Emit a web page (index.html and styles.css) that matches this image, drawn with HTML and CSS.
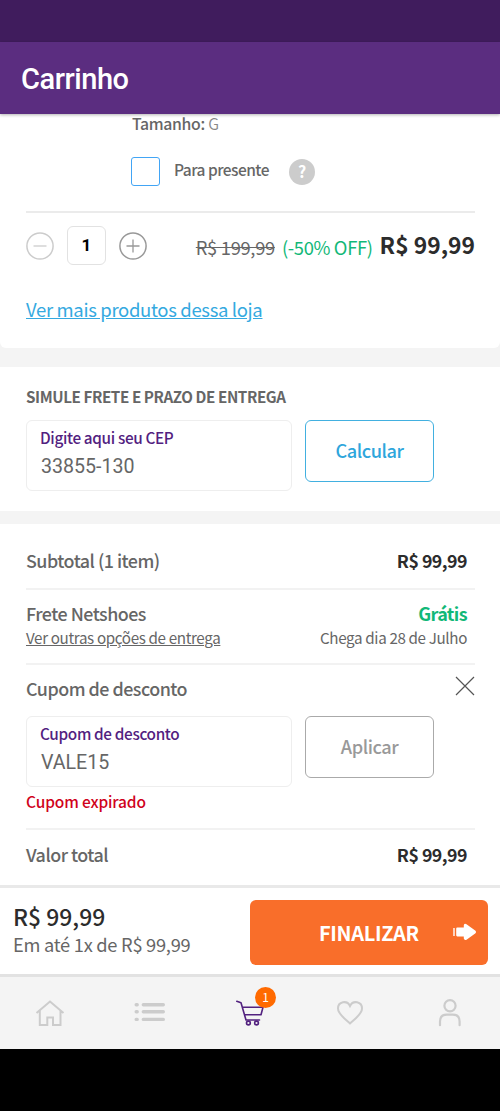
FILE: index.html
```html
<!DOCTYPE html>
<html lang="pt-BR">
<head>
<meta charset="utf-8">
<title>Carrinho</title>
<link rel="stylesheet" href="styles.css">
</head>
<body>
<div class="status"></div>
<header class="appbar"><h1>Carrinho</h1></header>
<main>
  <section class="product">
    <p class="size"><b>Tamanho:</b> <span>G</span></p>
    <div class="gift"><i class="check"></i><label>Para presente</label><i class="help">?</i></div>
    <div class="buy">
      <svg class="round" width="28" height="28" viewBox="0 0 28 28"><circle cx="14" cy="14" r="13.1"/><path d="M7.500 14h13"/></svg>
      <span class="qty">1</span>
      <svg class="round plus" width="28" height="28" viewBox="0 0 28 28"><circle cx="14" cy="14" r="13.1"/><path d="M7.500 14h13M14 7.500v13"/></svg>
      <div class="prices"><s>R$ 199,99</s><span class="off">(-50% OFF)</span><b>R$ 99,99</b></div>
    </div>
    <a class="store"><span>Ver mais produtos dessa loja</span></a>
  </section>
  <section class="shipping">
    <h2>SIMULE FRETE E PRAZO DE ENTREGA</h2>
    <div class="form">
      <div class="field"><label>Digite aqui seu CEP</label><span>33855-130</span></div>
      <button class="btn"><span>Calcular</span></button>
    </div>
  </section>
  <section class="summary">
    <div class="row subtotal"><span class="name">Subtotal (1 item)</span><b>R$ 99,99</b></div>
    <div class="freight">
      <div class="line"><span class="name">Frete Netshoes</span><b class="free">Grátis</b></div>
      <div class="line small"><u>Ver outras opções de entrega</u><span>Chega dia 28 de Julho</span></div>
    </div>
    <div class="coupon">
      <div class="coupon-head"><span class="name">Cupom de desconto</span>
        <svg width="20" height="20" viewBox="0 0 20 20"><path d="M1 1l18 18M19 1L1 19"/></svg></div>
      <div class="form">
        <div class="field"><label>Cupom de desconto</label><span>VALE15</span></div>
        <button class="btn disabled"><span>Aplicar</span></button>
      </div>
      <p class="error"><span>Cupom expirado</span></p>
    </div>
    <div class="row total"><span class="name">Valor total</span><b>R$ 99,99</b></div>
  </section>
</main>
<div class="checkout">
  <div class="amount"><strong>R$ 99,99</strong><span>Em até 1x de R$ 99,99</span></div>
  <button class="finish"><span>FINALIZAR</span>
    <svg width="24" height="18" viewBox="0 0 24 18"><path d="M1 5v8" stroke="#fff" stroke-width="1.400"/><path d="M4.300 4.600h6.500V2.200Q11.300 .2 13.500 1.200L22.500 7.700Q23.700 9 22.500 10.300L13.500 16.700Q11.300 17.600 10.800 15.600V13.400H4.300Q3.200 13.400 3.200 12.300V5.700Q3.200 4.600 4.300 4.600Z" fill="#fff"/></svg></button>
</div>
<nav>
  <a><svg width="30" height="28" viewBox="0 0 30 28"><path d="M1.500 14L15 2.500L28.500 14M4.800 11.500v14.500H12.300v-7.500h5.700v7.500h7.500V11.500"/></svg></a>
  <a><svg class="list" width="32" height="22" viewBox="0 0 32 22"><path d="M2.200 2.700h1M2.200 9.800h1M2.200 17.400h1M9.300 2.700h20M9.300 9.800h20M9.300 17.400h20"/></svg></a>
  <a class="cart"><svg width="30" height="28" viewBox="0 0 30 28"><path d="M1.800 2.200L6 3.700L11 21H24.500M7.500 8.300H28L26 15.700H9.500"/><circle cx="13.400" cy="24" r="1.900"/><circle cx="21.500" cy="24" r="1.900"/></svg><i>1</i></a>
  <a><svg width="28" height="26" viewBox="0 0 28 26"><path d="M14 23.500C9 19 2 14 2 8.500C2 1.500 11 -.2 14 6C17 -.2 26 1.500 26 8.500C26 14 19 19 14 23.500Z"/></svg></a>
  <a><svg class="person" width="24" height="30" viewBox="0 0 24 30"><circle cx="12" cy="7.700" r="5.600"/><path d="M2 27.200V23.500Q2 16.700 8.800 16.700H14.800Q21.600 16.700 21.600 23.500V27.200"/></svg></a>
</nav>
</body>
</html>
```

FILE: styles.css
```css
* { box-sizing: border-box; margin: 0; padding: 0; }
body {
  width: 500px; height: 1111px; overflow: hidden;
  display: flex; flex-direction: column;
  background: #000; color: #666;
  font-family: "Noto Sans CJK SC", "Noto Sans", sans-serif;
  white-space: nowrap;
}
i { font-style: normal; }
svg { display: block; fill: none; }
button { font: inherit; }
.status { height: 42px; flex: none; background: #401c5d; }
.appbar {
  height: 72px; flex: none; padding-left: 21px; position: relative; z-index: 1;
  background: #5b2d80; box-shadow: 0 1px 3px rgba(0,0,0,.3);
}
h1 { font: 500 29px/74px Roboto, sans-serif; color: #fff; letter-spacing: -.45px; }
main { height: 771px; flex: none; background: #f4f4f4; }
section { background: #fff; }

.product { height: 234px; padding: 0 25px 0 26px; border-radius: 0 0 6px 6px; }
.size { padding-left: 106px; height: 20px; line-height: 19px; font-size: 15.8px; }
.size b { font-weight: 500; letter-spacing: -.35px; }
.size span { color: #888; font-weight: 350; }
.gift { display: flex; align-items: center; height: 79px; padding: 0 0 6px 105px; }
.check { width: 29px; height: 29px; margin-top: 2px; border: 1px solid #42a5f5; border-radius: 3px; }
.gift label { font-size: 15.5px; font-weight: 500; letter-spacing: -.53px; line-height: 24px; margin: -4px 0 0 14px; width: 115px; }
.help {
  width: 26px; height: 26px; margin-top: 2px; border-radius: 50%; background: #ccc;
  color: #fff; font-weight: 700; font-size: 16px; line-height: 25px; text-align: center;
}
.buy { display: flex; align-items: center; height: 67px; border-top: 2px solid #ebebeb; margin-top: -2px; }
.round circle { stroke: #ccc; stroke-width: 1.5; }
.round path { stroke: #ccc; stroke-width: 1.3; }
.plus circle, .plus path { stroke: #999; }
.qty {
  width: 39px; height: 39px; margin: 0 13px; border: 1px solid #e2e2e2; border-radius: 6px;
  color: #000; font: 700 17px/37px Roboto, sans-serif; text-align: center;
}
.prices { margin-left: auto; display: flex; align-items: baseline; font-size: 18.4px; line-height: 30px; padding-top: 1px; }
.prices s { letter-spacing: -.34px; }
.prices .off { color: #12b878; margin: 0 7px 0 7px; letter-spacing: -.35px; }
.prices b { color: #2c2c2c; font-size: 22.8px; position: relative; top: -1px; }
.store { display: block; margin-top: 15px; font-size: 18.5px; line-height: 32px; color: #34a9e0; text-decoration: underline; letter-spacing: -.34px; }

.shipping { height: 144px; margin-top: 19px; padding: 19px 26px 0; }
h2 { font-size: 15.2px; line-height: 20px; font-weight: 700; letter-spacing: -.41px; }
.form { display: flex; gap: 13px; margin-top: 14px; }
.field { width: 266px; height: 71px; border: 1px solid #eee; border-radius: 6px; padding: 6px 13px; }
.field label { display: block; color: #52217f; font-size: 15.3px; line-height: 20px; font-weight: 500; letter-spacing: -.34px; }
.field span { display: block; font: 400 19.6px/30px Roboto, sans-serif; padding: 5px 0 0 1px; }
.btn { width: 129px; height: 62px; padding-bottom: 2px; border: 1px solid #42b0e0; border-radius: 6px; background: #fff; color: #2ea6dc; font-size: 18.2px; font-weight: 500; letter-spacing: -.45px; }
.disabled { border-color: #aaa; color: #999; padding-bottom: 3px; }

.summary { height: 362px; margin-top: 13px; padding: 0 25px 0 26px; }
.row { display: flex; justify-content: space-between; padding-right: 8px; font-size: 17.8px; }
.name { font-size: 17.9px; font-weight: 500; letter-spacing: -.51px; }
.row b { color: #2c2c2c; letter-spacing: -.53px; }
.subtotal { height: 64px; line-height: 73px; }
.freight { height: 75px; border-top: 2px solid #f2f2f2; padding: 11px 8px 0 0; }
.line { display: flex; justify-content: space-between; line-height: 24px; font-size: 18px; }
.line.small { font-size: 15.2px; letter-spacing: -.36px; }
.free { color: #12b878; letter-spacing: -.6px; }
.coupon { height: 165px; border-top: 2px solid #f2f2f2; }
.coupon-head { display: flex; justify-content: space-between; height: 51px; line-height: 47px; }
.coupon-head svg { margin-top: 11px; stroke: #555; stroke-width: 1.2; }
.coupon .form { margin-top: 0; }
.error { color: #d0021b; font-size: 15.5px; font-weight: 500; line-height: 28px; letter-spacing: -.15px; }
.total { border-top: 2px solid #f2f2f2; line-height: 48px; }

.checkout { height: 92px; flex: none; display: flex; justify-content: space-between; background: #fff; border-top: 3px solid #e9e9e9; border-bottom: 3px solid #e2e2e2; padding: 12px 12px 0 13px; }
.amount { display: flex; flex-direction: column; }
.amount strong { color: #2c2c2c; font-size: 22.9px; font-weight: 500; line-height: 32px; }
.amount span { font-size: 18.3px; line-height: 24px; letter-spacing: -.27px; }
.finish { width: 238px; height: 65px; border: 0; border-radius: 6px; background: #f96e2a; color: #fff; font-size: 20px; font-weight: 700; letter-spacing: -.35px; display: flex; align-items: center; padding: 0 11px 1px 69px; }
.finish svg { margin-left: auto; }
nav { height: 72px; flex: none; display: flex; background: #f4f4f4; }
nav a { flex: 1; display: flex; align-items: center; justify-content: center; position: relative; }
nav svg { stroke: #ccc; stroke-width: 2; }
nav .list { stroke-width: 3.4; stroke-linecap: round; }
nav .person { stroke-linecap: round; stroke-width: 2.2; }
.cart svg { stroke: #52217f; stroke-width: 1.6; stroke-linecap: round; stroke-linejoin: round; }
.cart i { position: absolute; left: 55px; top: 10px; width: 21px; height: 21px; border-radius: 50%; background: #ff6a00; color: #fff; font-size: 12px; line-height: 20px; text-align: center; }
```
